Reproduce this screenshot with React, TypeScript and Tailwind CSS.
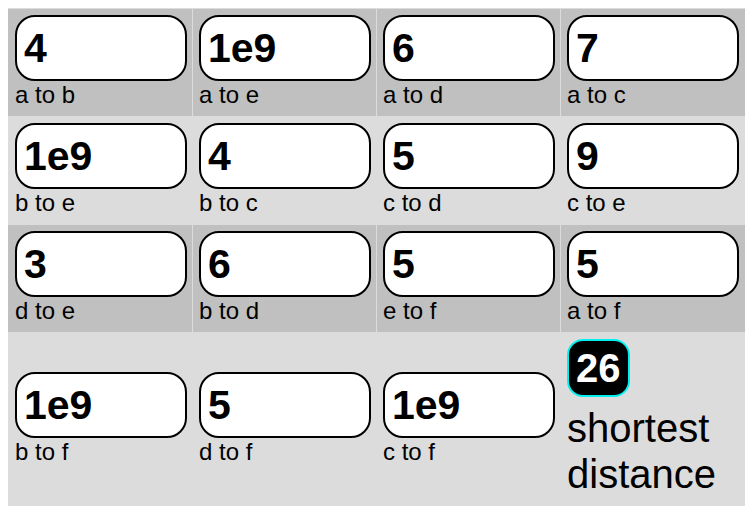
const rows: { value: string; label: string }[][] = [
  [
    { value: "4", label: "a to b" },
    { value: "1e9", label: "a to e" },
    { value: "6", label: "a to d" },
    { value: "7", label: "a to c" },
  ],
  [
    { value: "1e9", label: "b to e" },
    { value: "4", label: "b to c" },
    { value: "5", label: "c to d" },
    { value: "9", label: "c to e" },
  ],
  [
    { value: "3", label: "d to e" },
    { value: "6", label: "b to d" },
    { value: "5", label: "e to f" },
    { value: "5", label: "a to f" },
  ],
  [
    { value: "1e9", label: "b to f" },
    { value: "5", label: "d to f" },
    { value: "1e9", label: "c to f" },
  ],
];

const Edge = ({ value, label }: { value: string; label: string }) => (
  <>
    <div className="flex h-[66px] w-[172px] items-center rounded-[20px] border-2 border-black bg-white pl-[7px] text-[41px] font-bold leading-none text-black">
      {value}
    </div>
    <div className="text-[24px] leading-[27px] text-black">{label}</div>
  </>
);

const App = () => {
  return (
    <div
      className="min-h-screen bg-white p-2"
      style={{ fontFamily: '"Liberation Sans", Arial, sans-serif' }}
    >
      <div className="grid w-[737px] grid-cols-[184px_183px_183px_184px] grid-rows-[107px_107px_107px_173px] gap-px bg-[#dcdcdc] pt-px">
        {rows.slice(0, 3).map((row, r) =>
          row.map((cell, c) => (
            <div
              key={`${r}-${c}`}
              className={`flex flex-col justify-center pb-[2px] ${
                r % 2 === 0 ? "bg-[#c0c0c0]" : "bg-[#dcdcdc]"
              } ${c === 0 ? "pl-[7px]" : "pl-[6px]"}`}
            >
              <Edge value={cell.value} label={cell.label} />
            </div>
          ))
        )}

        {/* last row: three edges plus the result */}
        {rows[3].map((cell, c) => (
          <div
            key={`3-${c}`}
            className={`flex flex-col justify-center bg-[#dcdcdc] pb-[2px] ${
              c === 0 ? "pl-[7px]" : "pl-[6px]"
            }`}
          >
            <Edge value={cell.value} label={cell.label} />
          </div>
        ))}
        <div className="flex flex-col items-start bg-[#dcdcdc] pl-[6px] pt-[6px]">
          <div className="rounded-[16px] border-2 border-[#00f0f0] bg-black px-[7px] py-[5px] text-[40px] font-bold leading-[44px] text-white">
            26
          </div>
          <div className="mt-[8px] text-[40px] leading-[46px] text-black">
            shortest
            <br />
            distance
          </div>
        </div>
      </div>
    </div>
  );
};

export default App;
